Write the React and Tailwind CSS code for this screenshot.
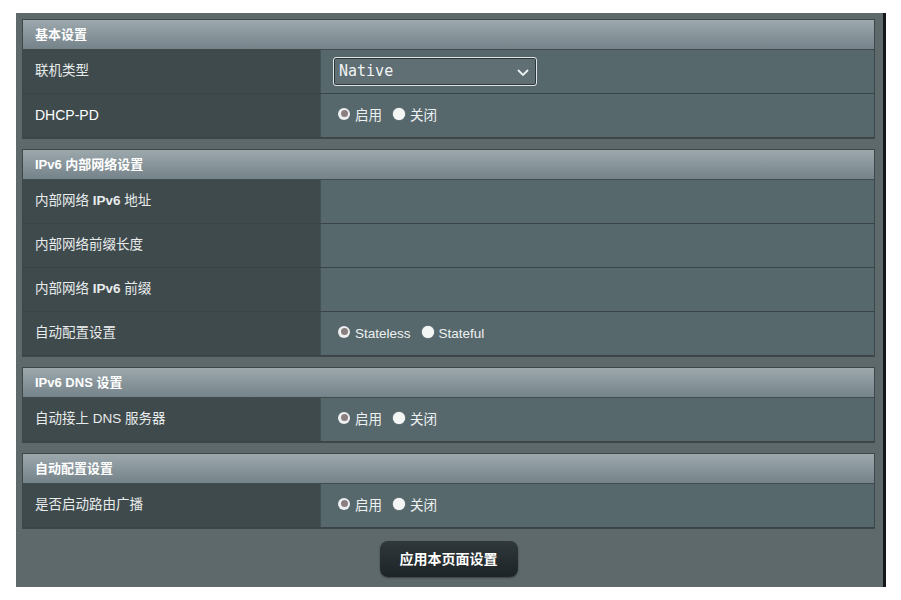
const FONT = { fontFamily: '"Liberation Sans", "Noto Sans CJK SC", sans-serif' };

function Radio({ checked, label }) {
  return (
    <label className="flex items-center gap-[5px] mr-[11px]">
      {checked ? (
        <span className="w-[12px] h-[12px] rounded-full bg-[#eef0f0] flex items-center justify-center -mt-[4px]">
          <span className="w-[7px] h-[7px] rounded-full bg-[#8a7f80]" />
        </span>
      ) : (
        <span className="w-[12px] h-[12px] rounded-full bg-[#f4f6f6] shadow-[0_0_1px_#fff] -mt-[4px]" />
      )}
      <span className="text-[13.5px] text-[#eef1f1] mt-[1px]">{label}</span>
    </label>
  );
}

function Header({ children }) {
  return (
    <div className="h-[30px] flex items-center pl-[12px] bg-gradient-to-b from-[#9ca8ac] to-[#75838a] border-b border-[#414b4e] text-[13px] font-bold text-white">
      {children}
    </div>
  );
}

function Row({ label, children }) {
  return (
    <div className="flex h-[44px] border-b border-[#3a4346]">
      <div className="w-[298px] bg-[#3f4a4d] flex items-center pl-[12px] text-[13.5px] text-[#e8ecec] border-r border-[#465356]">
        {label}
      </div>
      <div className="flex-1 bg-[#57686d] flex items-center pl-[17px]">{children}</div>
    </div>
  );
}

function Section({ title, children }) {
  return (
    <div className="border border-[#3e4749] mb-[10px]">
      <Header>{title}</Header>
      {children}
    </div>
  );
}

export default function App() {
  return (
    <div className="min-h-[600px] bg-white pt-[13px] pl-[16px]" style={FONT}>
      <div className="w-[870px] flex">
        <div className="w-[867px] bg-[#5e696c] pt-[6px] pl-[6px] pr-[8px] pb-[10px]">
          <Section title="基本设置">
            <Row label="联机类型">
              <div className="w-[204px] h-[29px] -ml-[5px] rounded-[3px] border border-[#dfe5e6] bg-[#5f6f74] shadow-[inset_0_0_0_1px_#2e3739] flex items-center justify-between px-[5px]">
                <span className="text-[15px] text-[#f2f4f4]" style={{ fontFamily: '"DejaVu Sans Mono", monospace' }}>
                  Native
                </span>
                <svg width="14" height="10" viewBox="0 0 14 10" className="mr-[1px]">
                  <path d="M2 3 L7 8 L12 3" stroke="#eef1f1" strokeWidth="1.8" fill="none" />
                </svg>
              </div>
            </Row>
            <Row label={<span className="text-white text-[14px]">DHCP-PD</span>}>
              <Radio checked label="启用" />
              <Radio label="关闭" />
            </Row>
          </Section>

          <Section title="IPv6 内部网络设置">
            <Row label={<span>内部网络 <b>IPv6</b> 地址</span>} />
            <Row label="内部网络前缀长度" />
            <Row label={<span>内部网络 <b>IPv6</b> 前缀</span>} />
            <Row label="自动配置设置">
              <Radio checked label="Stateless" />
              <Radio label="Stateful" />
            </Row>
          </Section>

          <Section title="IPv6 DNS 设置">
            <Row label="自动接上 DNS 服务器">
              <Radio checked label="启用" />
              <Radio label="关闭" />
            </Row>
          </Section>

          <Section title="自动配置设置">
            <Row label="是否启动路由广播">
              <Radio checked label="启用" />
              <Radio label="关闭" />
            </Row>
          </Section>

          <div className="flex justify-center pt-[2px]">
            <button className="w-[138px] h-[36px] rounded-[8px] bg-gradient-to-b from-[#2f383b] to-[#1d2427] text-white text-[14px] font-bold shadow-[0_1px_2px_rgba(0,0,0,0.4)]">
              应用本页面设置
            </button>
          </div>
        </div>
        <div className="w-[3px] bg-[#15191b]" />
      </div>
    </div>
  );
}
